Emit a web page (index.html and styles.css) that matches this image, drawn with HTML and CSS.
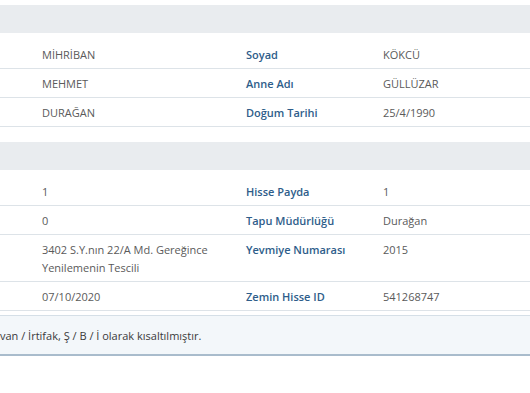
FILE: index.html
```html
<!DOCTYPE html>
<html lang="tr">
<head>
<meta charset="utf-8">
<link rel="stylesheet" href="styles.css">
</head>
<body>
<div class="page">
  <div class="section-head"></div>
  <div class="table">
    <div class="row">
      <div class="cell lead"></div>
      <div class="cell value">MİHRİBAN</div>
      <div class="cell label">Soyad</div>
      <div class="cell value">KÖKCÜ</div>
    </div>
    <div class="row">
      <div class="cell lead"></div>
      <div class="cell value">MEHMET</div>
      <div class="cell label">Anne Adı</div>
      <div class="cell value">GÜLLÜZAR</div>
    </div>
    <div class="row">
      <div class="cell lead"></div>
      <div class="cell value">DURAĞAN</div>
      <div class="cell label">Doğum Tarihi</div>
      <div class="cell value">25/4/1990</div>
    </div>
  </div>

  <div class="section-head second"></div>
  <div class="table">
    <div class="row">
      <div class="cell lead"></div>
      <div class="cell value">1</div>
      <div class="cell label">Hisse Payda</div>
      <div class="cell value">1</div>
    </div>
    <div class="row">
      <div class="cell lead"></div>
      <div class="cell value">0</div>
      <div class="cell label">Tapu Müdürlüğü</div>
      <div class="cell value">Durağan</div>
    </div>
    <div class="row">
      <div class="cell lead"></div>
      <div class="cell value">3402 S.Y.nın 22/A Md. Gereğince Yenilemenin Tescili</div>
      <div class="cell label">Yevmiye Numarası</div>
      <div class="cell value">2015</div>
    </div>
    <div class="row">
      <div class="cell lead"></div>
      <div class="cell value">07/10/2020</div>
      <div class="cell label">Zemin Hisse ID</div>
      <div class="cell value">541268747</div>
    </div>
  </div>

  <div class="note"><span class="note-text">van / İrtifak, Ş / B / İ olarak kısaltılmıştır.</span></div>
</div>
</body>
</html>
```
FILE: styles.css
```css
html, body {
  margin: 0;
  padding: 0;
  background: #ffffff;
  overflow: hidden;
}
body {
  font-family: "Open Sans", "Noto Sans", sans-serif;
  font-size: 11px;
  color: #555555;
}
.page {
  width: 530px;
  padding-top: 5px;
}
.section-head {
  height: 28px;
  background: #e9ecef;
}
.section-head.second {
  margin-top: 15px;
}
.table {
  margin-top: 7px;
}
.row {
  display: grid;
  grid-template-columns: 35px 204px 137px 1fr;
  border-bottom: 1px solid #dde3e8;
}
.cell {
  padding: 6px 7px 4px;
  line-height: 18px;
}
.lead {
  padding: 0;
}
.value {
  color: #5a5a5a;
}
.label {
  color: #2e5d8a;
  font-weight: 600;
}
.note {
  margin-top: 4px;
  height: 38px;
  background: #f3f7fa;
  border-top: 1px solid #d5dfe7;
  border-bottom: 2px solid #a9bccc;
  display: flex;
  align-items: center;
  color: #3a3a3a;
}
.note-text {
  margin-left: 0;
}
```
